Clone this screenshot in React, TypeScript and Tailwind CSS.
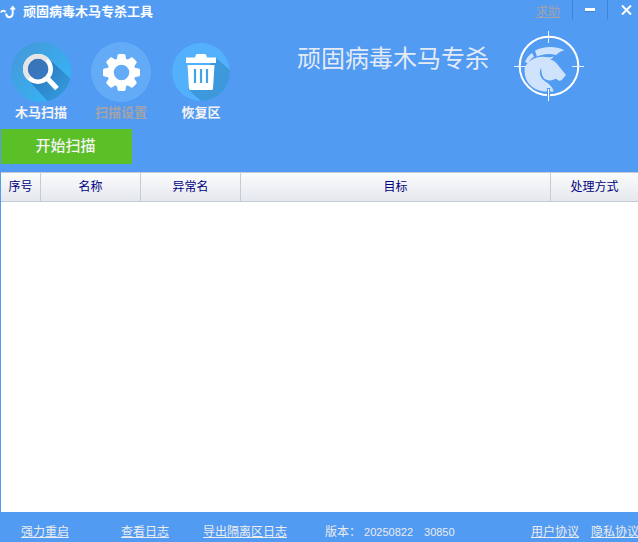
import { useState } from "react";
import type { ReactNode } from "react";

const columns = [
  { label: "序号", width: "w-10" },
  { label: "名称", width: "w-[100px]" },
  { label: "异常名", width: "w-[100px]" },
  { label: "目标", width: "" },
  { label: "处理方式", width: "w-[87px]" },
];

function AppIcon() {
  return (
    <svg width="16" height="16" viewBox="0 0 16 16" fill="none" stroke="#fff" strokeWidth="2" aria-hidden="true">
      <path d="M1 8.500C1.500 6.500 4.500 6 5.300 8.200M6 9.500c.5 2.500 1.200 3.800 3 3.800 2.500-.2 3.500-1.800 3.700-4V4" />
      <path d="M9.500 5.500 12.700 1.500 16 5.500z" fill="#fff" stroke="none" />
    </svg>
  );
}

function ScanIcon() {
  return (
    <svg width="60" height="60" viewBox="0 0 60 60" aria-hidden="true">
      <defs>
        <linearGradient id="scanDisc" x1="0" y1="0" x2="1" y2="1">
          <stop offset="0.2" stopColor="#429ddd" />
          <stop offset="1" stopColor="#33b9fb" />
        </linearGradient>
        <linearGradient id="scanShade" x1="0" y1="0" x2="1" y2="1">
          <stop offset="0.3" stopColor="#2b7fc4" />
          <stop offset="1" stopColor="#38a4e6" />
        </linearGradient>
        <linearGradient id="scanLens" x1="0" y1="0" x2="1" y2="1">
          <stop offset="0" stopColor="#3d6fb5" />
          <stop offset="1" stopColor="#347dc3" />
        </linearGradient>
        <clipPath id="scanClip">
          <circle cx="30" cy="30" r="30" />
        </clipPath>
      </defs>
      <circle cx="30" cy="30" r="30" fill="url(#scanDisc)" />
      <path d="M16.500 37 38 17l24 22v24H40z" fill="url(#scanShade)" clipPath="url(#scanClip)" />
      <path d="m36 36 10 10.500" stroke="#fff" strokeWidth="5" />
      <circle cx="27" cy="27" r="12.700" fill="url(#scanLens)" stroke="#fff" strokeWidth="4.600" />
      <path d="M18 36a12.700 12.700 0 0 1 18-18" fill="none" stroke="#e4e4e4" strokeWidth="4.600" />
    </svg>
  );
}

function SettingsIcon() {
  const teeth = [0, 45, 90, 135, 180, 225, 270, 315];
  return (
    <svg width="60" height="60" viewBox="0 0 60 60" aria-hidden="true">
      <circle cx="30" cy="30" r="30" fill="#63abf6" />
      {teeth.map((angle) => (
        <path
          key={angle}
          d="m25.500 19 1-5.500q.3-1.500 1.500-1.500h5q1.200 0 1.500 1.500l1 5.500z"
          fill="#fff"
          transform={`rotate(${angle} 30.500 30.500)`}
        />
      ))}
      <circle cx="30.500" cy="30.500" r="11" fill="none" stroke="#fff" strokeWidth="6.500" />
    </svg>
  );
}

function RestoreIcon() {
  return (
    <svg width="60" height="60" viewBox="0 0 60 60" aria-hidden="true">
      <defs>
        <clipPath id="restoreClip">
          <circle cx="30" cy="30" r="29" />
        </clipPath>
      </defs>
      <circle cx="30" cy="30" r="29" fill="#52b0fc" />
      <path d="m45 16 17 15v31H33L17 47z" fill="#3d99dc" clipPath="url(#restoreClip)" />
      <path
        d="M15 15.500h9l.7-2.200q.3-1.300 1.500-1.300h7.600q1.200 0 1.500 1.300l.7 2.200h9V21H15zM16.500 23h27L42 46.500q-.2 1.500-1.500 1.500h-21q-1.300 0-1.500-1.500z"
        fill="#fff"
      />
      <path d="M24 27v14M30 27v14M36 27v14" stroke="#42a2ea" strokeWidth="2.200" />
    </svg>
  );
}

function HorseLogo() {
  return (
    <svg width="70" height="70" viewBox="0 0 70 70" aria-hidden="true">
      <circle cx="35" cy="35" r="29.300" fill="none" stroke="#fff" strokeWidth="2" />
      <path d="M34.500 0v12M34.500 58v12M0 35.500h12M58 35.500h12" stroke="#e8f2fe" />
      <path d="M21 19.700c8-4.500 20-5.200 29.500-.5-3.500 1-6 2.300-8.500 4.800-7-2-13-1-19 1.500z" fill="#cfe3fc" />
      <path d="M18 22l2 3.500c-2.500 1.800-4.200 4-5.700 6.800L11 31c1.500-4 3.700-6.700 7-9z" fill="#cfe3fc" />
      <path
        d="M10.700 36.500c3-6.500 10-10.500 18-10.700 3.500 0 7.500 1 11-.3-1 1.500-2 2.500-3.500 3 3 .8 5 2 6.500 4L52 44l-4.500 5.200-2.500.5-3-2c-2 .5-3.800 2-6.700 1.800-3.300-.2-5.500-1.800-6.500-4-1.300-2.500-1.500-5.500-1.500-8.500-2 2.500-1.500 6.500-.3 9 2 4 6.500 5 9.300 8.500 1.700 2 3 4 3.500 6H32c-6 0-13-2.500-18-9-3-4.500-4-10-3.300-15z"
        fill="#cfe3fc"
      />
      <path d="M34.500 57v8" stroke="#529bf3" strokeWidth="3" />
      <path d="M34.500 58v12" stroke="#fff" />
    </svg>
  );
}

interface NavButtonProps {
  label: string;
  icon: ReactNode;
  disabled?: boolean;
}

function NavButton({ label, icon, disabled = false }: NavButtonProps) {
  return (
    <button
      type="button"
      disabled={disabled}
      className={`flex w-20 flex-col items-center gap-0.5 text-[13px] leading-[18px] font-bold ${
        disabled ? "text-[#a3a3a8]" : "text-[#f4f4f4]"
      }`}
    >
      {icon}
      {label}
    </button>
  );
}

export default function App() {
  const [scanning, setScanning] = useState(false);

  return (
    <div className="flex min-h-screen flex-col overflow-hidden bg-[#529bf3] font-['Liberation_Sans','Noto_Sans_CJK_SC',sans-serif]">
      {/* Title bar */}
      <header className="flex h-6 items-start justify-between">
        <div className="flex h-6 items-center gap-[7px]">
          <AppIcon />
          <h1 className="text-[13px] font-bold text-white">顽固病毒木马专杀工具</h1>
        </div>
        <div className="flex items-start">
          <a href="#help" className="mr-3 text-xs leading-6 text-[#a3a3a8] underline">
            求助
          </a>
          <button
            type="button"
            aria-label="最小化"
            className="flex h-5 w-[35px] items-center justify-center border-l border-[#4384d6]"
          >
            <svg width="10" height="4" viewBox="0 0 10 4">
              <path d="M0 0h10v4H0z" fill="#3f7fcb" />
              <path d="M0 0h10v3H0z" fill="#fff" />
            </svg>
          </button>
          <button
            type="button"
            aria-label="关闭"
            className="flex h-5 w-[31px] items-center justify-end border-l border-[#4384d6] pr-1.5"
          >
            <svg width="11" height="10" viewBox="0 0 11 10" stroke="#fff" strokeWidth="2">
              <path d="m1 .5 9 9M10 .5l-9 9" />
            </svg>
          </button>
        </div>
      </header>

      {/* Toolbar */}
      <div className="flex items-start justify-between pt-[18px] pr-[54px] pl-px">
        <nav className="flex">
          <NavButton label="木马扫描" icon={<ScanIcon />} />
          <NavButton label="扫描设置" icon={<SettingsIcon />} disabled />
          <NavButton label="恢复区" icon={<RestoreIcon />} />
        </nav>
        <div className="-mt-[11px] flex items-start gap-[25px]">
          <p className="pt-3 text-2xl text-[#e4ebf6]">顽固病毒木马专杀</p>
          <HorseLogo />
        </div>
      </div>
      <div className="px-px pt-[7px] pb-2">
        <button
          type="button"
          aria-pressed={scanning}
          onClick={() => setScanning(!scanning)}
          className="h-[35px] w-[131px] bg-[#5bbf27] pr-0.5 text-[15px] font-medium text-[#f4f4f4]"
        >
          开始扫描
        </button>
      </div>

      {/* Result list */}
      <main className="ml-px flex-1 bg-white">
        <table className="w-full table-fixed border-separate border-spacing-0 text-xs text-[#000080]">
          <thead>
            <tr className="h-[30px] bg-linear-to-b from-[#fbfcfd] to-[#e4e7ec]">
              {columns.map((col) => (
                <th
                  key={col.label}
                  scope="col"
                  className={`border-y border-r border-[#c3cbd6] p-0 font-normal last:border-r-0 ${col.width}`}
                >
                  {col.label}
                </th>
              ))}
            </tr>
          </thead>
          <tbody />
        </table>
      </main>

      {/* Footer links */}
      <footer className="flex h-[30px] items-end justify-between pb-px text-xs leading-[18px] whitespace-nowrap text-[#ececec]">
        <div className="flex pl-[21px]">
          <a href="#restart" className="mr-[52px] underline">强力重启</a>
          <a href="#log" className="mr-[34px] underline">查看日志</a>
          <a href="#export" className="mr-[38px] underline">导出隔离区日志</a>
          <span className="mr-[3px]">版本：</span>
          <span className="mr-[11px] text-[11px]">20250822</span>
          <span className="text-[11px]">30850</span>
        </div>
        <div className="-mr-px flex gap-3">
          <a href="#terms" className="underline">用户协议</a>
          <a href="#privacy" className="underline">隐私协议</a>
        </div>
      </footer>
    </div>
  );
}
